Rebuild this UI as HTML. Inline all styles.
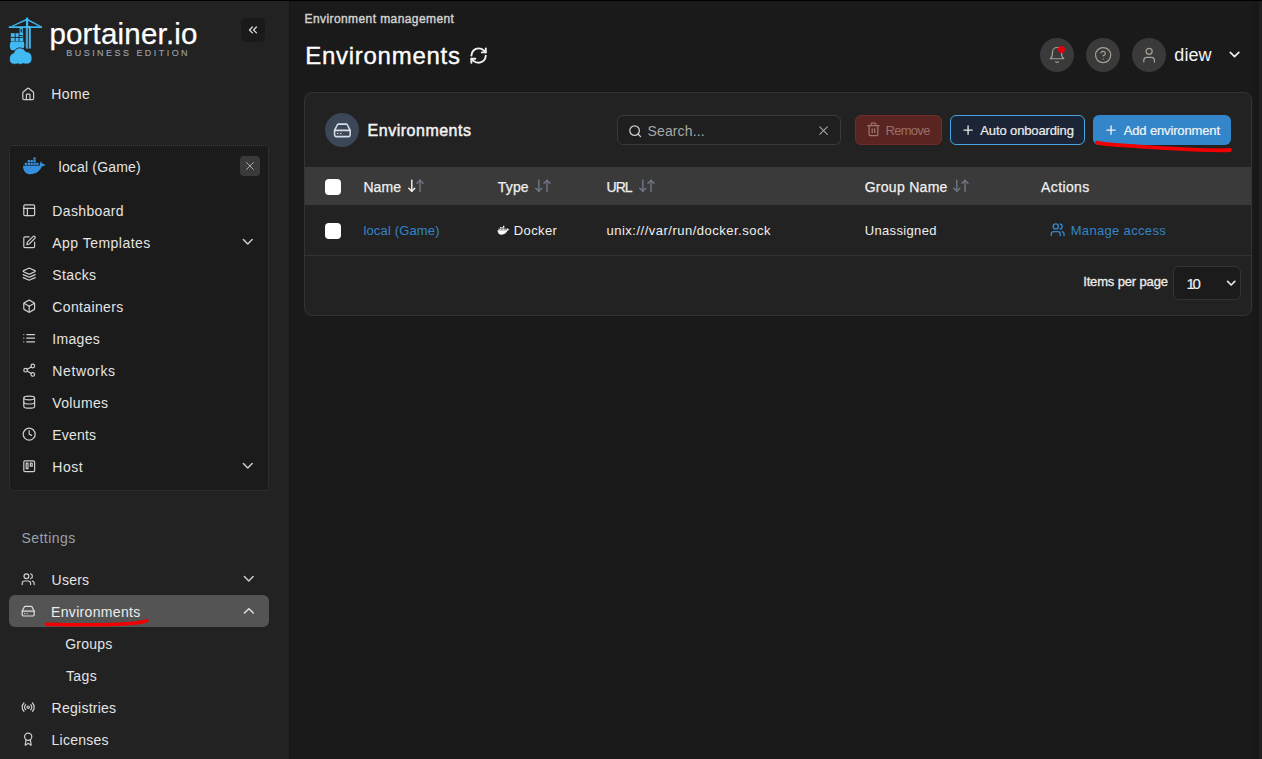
<!DOCTYPE html>
<html><head><meta charset="utf-8">
<style>
*{box-sizing:border-box;margin:0;padding:0}
html,body{width:1262px;height:759px;overflow:hidden;background:#1a1a1a;font-family:"Liberation Sans",sans-serif;color:#e6e6e6;position:relative}
.t{position:absolute;white-space:nowrap}
.b{position:absolute}
svg.i{position:absolute;overflow:visible}
</style></head><body>
<div class="b" style="left:0px;top:0px;width:289px;height:759px;background:#222222"></div>
<div class="b" style="left:289px;top:0px;width:1px;height:759px;background:#171717"></div>
<div class="b" style="left:1253px;top:0px;width:6px;height:759px;background:#181818"></div>
<div class="b" style="left:1259px;top:0px;width:3px;height:759px;background:#202020"></div>
<div class="b" style="left:0px;top:0px;width:1262px;height:1px;background:#000"></div>
<svg class="i" style="left:0;top:0" width="50" height="70" viewBox="0 0 50 70">
<g fill="#41b9f2">
<path d="M8.8 26.2 H42 V28 H8.8z"/>
<path d="M27 18.6 L10.2 26.4 L12.8 26.4 L27 20.2 L39.2 26.4 L41.8 26.4z"/>
<rect x="26" y="17.6" width="2.2" height="9"/>
<rect x="25.8" y="26" width="5" height="22.5"/>
<rect x="19.6" y="28" width="3.2" height="8.8"/>
<rect x="10.8" y="33.2" width="12.4" height="8"/>
<path d="M12.3 41.6 H23.6 C24.6 43 24.6 46.5 23.6 48.2 C22.4 50 20 50.3 17 50.3 H12.6 C10.4 50.3 9.8 48 9.8 45.5 C9.8 43 10.6 41.6 12.3 41.6z"/>
</g>
<g fill="#41b9f2" stroke="#222222" stroke-width="0.9">
<path d="M12.6 64 C10 63.6 9.2 61 9.4 58.2 C9.7 55.2 11.2 53.4 13.6 53 C14.4 50 16.6 48 19.6 47.9 C22.6 47.9 24.8 49.4 25.8 51.6 C29.2 51.6 31.6 53.6 32 57 C32.4 60.4 31.2 63.2 28.6 63.8 C27 64.4 25 64.2 23.4 63.6 C21.6 64.6 19.4 64.6 18 63.8 C16.4 64.4 14 64.4 12.6 64z"/>
</g>
<g fill="#222222">
<rect x="28.2" y="28.2" width="0.8" height="20.5"/>
<rect x="20.6" y="29" width="1.2" height="3.4"/>
<rect x="19.6" y="35" width="3.2" height="0.9"/>
<rect x="10.8" y="36.9" width="12.4" height="0.9"/>
<rect x="14.7" y="33.2" width="0.9" height="8"/>
<rect x="18.6" y="33.2" width="0.9" height="8"/>
</g>
<rect x="26.4" y="28.2" width="1.6" height="20" fill="#4c94bd"/>
</svg>
<div class="t" style="left:49.4px;top:18.799999999999997px;font-size:29.5px;line-height:29.5px;color:#ffffff;letter-spacing:0.198px;-webkit-text-stroke:0.25px #ffffff;">portainer.io</div>
<div class="t" style="left:66.3px;top:49px;font-size:9px;line-height:9px;color:#9ca3af;letter-spacing:2.452px;-webkit-text-stroke:0.12px #9ca3af;">BUSINESS EDITION</div>
<div class="b" style="left:241px;top:18px;width:24px;height:24px;background:#1a1a1a;border-radius:5px"></div>
<svg class="i" style="left:246.1px;top:22.8px;" width="13.92" height="13.92" viewBox="0 0 24 24" fill="none" stroke="#d8d8d8" stroke-width="2.3" stroke-linecap="round" stroke-linejoin="round"><path d="m11 17-5-5 5-5"/><path d="m18 17-5-5 5-5"/></svg>
<svg class="i" style="left:20.8px;top:87.1px;" width="14.4" height="14.4" viewBox="0 0 24 24" fill="none" stroke="#cfcfcf" stroke-width="2" stroke-linecap="round" stroke-linejoin="round"><path d="M15 21v-8a1 1 0 0 0-1-1h-4a1 1 0 0 0-1 1v8"/><path d="M3 10a2 2 0 0 1 .709-1.528l7-5.999a2 2 0 0 1 2.582 0l7 5.999A2 2 0 0 1 21 10v9a2 2 0 0 1-2 2H5a2 2 0 0 1-2-2z"/></svg>
<div class="t" style="left:51.3px;top:87px;font-size:14px;line-height:14px;color:#e4e4e4;letter-spacing:0.365px;">Home</div>
<div class="b" style="left:9px;top:145px;width:260px;height:346px;background:#1b1b1b;border:1px dotted #3d3d3d;border-radius:4px"></div>
<svg class="i" style="left:20px;top:154px" width="30" height="24" viewBox="20 154 30 24">
<g fill="#3490dc">
<rect x="24.8" y="162.8" width="2.3" height="2.4"/><rect x="27.7" y="162.8" width="2.3" height="2.4"/><rect x="30.5" y="162.8" width="2.3" height="2.4"/><rect x="33.4" y="162.8" width="2.3" height="2.4"/><rect x="36.2" y="162.8" width="2.3" height="2.4"/>
<rect x="27.7" y="160" width="2.3" height="2.3"/><rect x="30.5" y="160" width="2.3" height="2.3"/><rect x="33.4" y="160" width="2.3" height="2.3"/>
<rect x="33.4" y="157.4" width="2.3" height="2.3"/>
<path d="M23 165.7 H39.6 C39.9 164 40.3 162.4 40.9 161.6 C41.8 162.3 42.4 163.2 42.6 164 C43.6 163.8 44.8 164 45.6 164.6 C44.8 165.6 43.4 166.4 41.8 166.6 C40.2 171 36 174.3 30.5 174.3 C25.8 174.3 23 170.8 23 165.7z"/>
</g></svg>
<div class="t" style="left:58.6px;top:160px;font-size:14px;line-height:14px;color:#e4e4e4;letter-spacing:0.176px;">local (Game)</div>
<div class="b" style="left:240px;top:156px;width:20px;height:20px;background:#3a3a3a;border-radius:4px"></div>
<svg class="i" style="left:243.1px;top:159.1px;" width="13.92" height="13.92" viewBox="0 0 24 24" fill="none" stroke="#b8bcc6" stroke-width="1.5" stroke-linecap="round" stroke-linejoin="round"><line x1="18" y1="6" x2="6" y2="18"/><line x1="6" y1="6" x2="18" y2="18"/></svg>
<svg class="i" style="left:21.7px;top:202.8px;" width="14.4" height="14.4" viewBox="0 0 24 24" fill="none" stroke="#cfcfcf" stroke-width="2" stroke-linecap="round" stroke-linejoin="round"><rect width="18" height="18" x="3" y="3" rx="2"/><path d="M3 9h18"/><path d="M9 21V9"/></svg>
<div class="t" style="left:52.3px;top:204px;font-size:14px;line-height:14px;color:#e4e4e4;letter-spacing:0.354px;">Dashboard</div>
<svg class="i" style="left:21.7px;top:234.8px;" width="14.4" height="14.4" viewBox="0 0 24 24" fill="none" stroke="#cfcfcf" stroke-width="2" stroke-linecap="round" stroke-linejoin="round"><path d="M12 3H5a2 2 0 0 0-2 2v14a2 2 0 0 0 2 2h14a2 2 0 0 0 2-2v-7"/><path d="M18.375 2.625a2.121 2.121 0 1 1 3 3L12 15l-4 1 1-4Z"/></svg>
<div class="t" style="left:52.3px;top:236px;font-size:14px;line-height:14px;color:#e4e4e4;letter-spacing:0.466px;">App Templates</div>
<svg class="i" style="left:21.7px;top:266.8px;" width="14.4" height="14.4" viewBox="0 0 24 24" fill="none" stroke="#cfcfcf" stroke-width="2" stroke-linecap="round" stroke-linejoin="round"><path d="M12.83 2.18a2 2 0 0 0-1.66 0L2.6 6.08a1 1 0 0 0 0 1.83l8.58 3.91a2 2 0 0 0 1.66 0l8.58-3.9a1 1 0 0 0 0-1.83Z"/><path d="m22 17.65-9.17 4.16a2 2 0 0 1-1.66 0L2 17.65"/><path d="m22 12.65-9.17 4.16a2 2 0 0 1-1.66 0L2 12.65"/></svg>
<div class="t" style="left:52.3px;top:268px;font-size:14px;line-height:14px;color:#e4e4e4;letter-spacing:0.36px;">Stacks</div>
<svg class="i" style="left:21.7px;top:298.8px;" width="14.4" height="14.4" viewBox="0 0 24 24" fill="none" stroke="#cfcfcf" stroke-width="2" stroke-linecap="round" stroke-linejoin="round"><path d="M21 16V8a2 2 0 0 0-1-1.73l-7-4a2 2 0 0 0-2 0l-7 4A2 2 0 0 0 3 8v8a2 2 0 0 0 1 1.73l7 4a2 2 0 0 0 2 0l7-4A2 2 0 0 0 21 16z"/><polyline points="3.27 6.96 12 12.01 20.73 6.96"/><line x1="12" y1="22.08" x2="12" y2="12"/></svg>
<div class="t" style="left:52.3px;top:300px;font-size:14px;line-height:14px;color:#e4e4e4;letter-spacing:0.354px;">Containers</div>
<svg class="i" style="left:21.7px;top:330.8px;" width="14.4" height="14.4" viewBox="0 0 24 24" fill="none" stroke="#cfcfcf" stroke-width="2" stroke-linecap="round" stroke-linejoin="round"><line x1="8" y1="6" x2="21" y2="6"/><line x1="8" y1="12" x2="21" y2="12"/><line x1="8" y1="18" x2="21" y2="18"/><line x1="3" y1="6" x2="3.01" y2="6"/><line x1="3" y1="12" x2="3.01" y2="12"/><line x1="3" y1="18" x2="3.01" y2="18"/></svg>
<div class="t" style="left:52.3px;top:332px;font-size:14px;line-height:14px;color:#e4e4e4;letter-spacing:0.312px;">Images</div>
<svg class="i" style="left:21.7px;top:362.8px;" width="14.4" height="14.4" viewBox="0 0 24 24" fill="none" stroke="#cfcfcf" stroke-width="2" stroke-linecap="round" stroke-linejoin="round"><circle cx="18" cy="5" r="3"/><circle cx="6" cy="12" r="3"/><circle cx="18" cy="19" r="3"/><line x1="8.59" y1="13.51" x2="15.42" y2="17.49"/><line x1="15.41" y1="6.51" x2="8.59" y2="10.49"/></svg>
<div class="t" style="left:52.3px;top:364px;font-size:14px;line-height:14px;color:#e4e4e4;letter-spacing:0.628px;">Networks</div>
<svg class="i" style="left:21.7px;top:394.8px;" width="14.4" height="14.4" viewBox="0 0 24 24" fill="none" stroke="#cfcfcf" stroke-width="2" stroke-linecap="round" stroke-linejoin="round"><ellipse cx="12" cy="5" rx="9" ry="3"/><path d="M21 12c0 1.66-4 3-9 3s-9-1.34-9-3"/><path d="M3 5v14c0 1.66 4 3 9 3s9-1.34 9-3V5"/></svg>
<div class="t" style="left:52.3px;top:396px;font-size:14px;line-height:14px;color:#e4e4e4;letter-spacing:0.351px;">Volumes</div>
<svg class="i" style="left:21.7px;top:426.8px;" width="14.4" height="14.4" viewBox="0 0 24 24" fill="none" stroke="#cfcfcf" stroke-width="2" stroke-linecap="round" stroke-linejoin="round"><circle cx="12" cy="12" r="10"/><polyline points="12 6 12 12 16 14"/></svg>
<div class="t" style="left:52.3px;top:428px;font-size:14px;line-height:14px;color:#e4e4e4;letter-spacing:0.185px;">Events</div>
<svg class="i" style="left:21.7px;top:458.8px;" width="14.4" height="14.4" viewBox="0 0 24 24" fill="none" stroke="#cfcfcf" stroke-width="2" stroke-linecap="round" stroke-linejoin="round"><rect width="18" height="18" x="3" y="3" rx="2" ry="2"/><rect width="3" height="9" x="7" y="7"/><rect width="3" height="5" x="14" y="7"/></svg>
<div class="t" style="left:52.3px;top:460px;font-size:14px;line-height:14px;color:#e4e4e4;letter-spacing:0.508px;">Host</div>
<svg class="i" style="left:239.25px;top:232.9px;" width="17.52" height="17.52" viewBox="0 0 24 24" fill="none" stroke="#cfcfcf" stroke-width="2" stroke-linecap="round" stroke-linejoin="round"><polyline points="6 9 12 15 18 9"/></svg>
<svg class="i" style="left:239.25px;top:456.9px;" width="17.52" height="17.52" viewBox="0 0 24 24" fill="none" stroke="#cfcfcf" stroke-width="2" stroke-linecap="round" stroke-linejoin="round"><polyline points="6 9 12 15 18 9"/></svg>
<div class="t" style="left:21.4px;top:531px;font-size:14px;line-height:14px;color:#9aa1ab;letter-spacing:0.467px;">Settings</div>
<svg class="i" style="left:20.5px;top:572.1px;" width="14.4" height="14.4" viewBox="0 0 24 24" fill="none" stroke="#cfcfcf" stroke-width="2" stroke-linecap="round" stroke-linejoin="round"><path d="M16 21v-2a4 4 0 0 0-4-4H6a4 4 0 0 0-4 4v2"/><circle cx="9" cy="7" r="4"/><path d="M22 21v-2a4 4 0 0 0-3-3.87"/><path d="M16 3.13a4 4 0 0 1 0 7.75"/></svg>
<div class="t" style="left:51.6px;top:573px;font-size:14px;line-height:14px;color:#e4e4e4;letter-spacing:0.217px;">Users</div>
<svg class="i" style="left:240.25px;top:570.06px;" width="17.52" height="17.52" viewBox="0 0 24 24" fill="none" stroke="#cfcfcf" stroke-width="2" stroke-linecap="round" stroke-linejoin="round"><polyline points="6 9 12 15 18 9"/></svg>
<div class="b" style="left:9px;top:595px;width:260px;height:32px;background:#545454;border-radius:6px"></div>
<svg class="i" style="left:20.5px;top:604.2px;" width="14.4" height="14.4" viewBox="0 0 24 24" fill="none" stroke="#e0e0e0" stroke-width="2" stroke-linecap="round" stroke-linejoin="round"><line x1="22" y1="12" x2="2" y2="12"/><path d="M5.45 5.11L2 12v6a2 2 0 0 0 2 2h16a2 2 0 0 0 2-2v-6l-3.45-6.89A2 2 0 0 0 16.76 4H7.24a2 2 0 0 0-1.79 1.11z"/><line x1="6" y1="16" x2="6.01" y2="16"/><line x1="10" y1="16" x2="10.01" y2="16"/></svg>
<div class="t" style="left:51.0px;top:605px;font-size:14px;line-height:14px;color:#ececec;letter-spacing:0.334px;">Environments</div>
<svg class="i" style="left:239.9px;top:602px;" width="17.76" height="17.76" viewBox="0 0 24 24" fill="none" stroke="#e0e0e0" stroke-width="2" stroke-linecap="round" stroke-linejoin="round"><polyline points="18 15 12 9 6 15"/></svg>
<div class="t" style="left:65.2px;top:637px;font-size:14px;line-height:14px;color:#e4e4e4;letter-spacing:0.253px;">Groups</div>
<div class="t" style="left:66.0px;top:669px;font-size:14px;line-height:14px;color:#e4e4e4;letter-spacing:0.356px;">Tags</div>
<svg class="i" style="left:20.94px;top:699.64px;" width="14.4" height="14.4" viewBox="0 0 24 24" fill="none" stroke="#cfcfcf" stroke-width="2" stroke-linecap="round" stroke-linejoin="round"><circle cx="12" cy="12" r="2"/><path d="M16.24 7.76a6 6 0 0 1 0 8.49m-8.48-.01a6 6 0 0 1 0-8.49m11.31-2.82a10 10 0 0 1 0 14.14m-14.14 0a10 10 0 0 1 0-14.14"/></svg>
<div class="t" style="left:51.6px;top:701px;font-size:14px;line-height:14px;color:#e4e4e4;letter-spacing:0.251px;">Registries</div>
<svg class="i" style="left:21px;top:732.2px;" width="14.4" height="14.4" viewBox="0 0 24 24" fill="none" stroke="#cfcfcf" stroke-width="2" stroke-linecap="round" stroke-linejoin="round"><path d="m15.477 12.89 1.515 8.526a.5.5 0 0 1-.81.47l-3.58-2.687a1 1 0 0 0-1.197 0l-3.586 2.686a.5.5 0 0 1-.81-.469l1.514-8.526"/><circle cx="12" cy="8" r="6"/></svg>
<div class="t" style="left:51.6px;top:733px;font-size:14px;line-height:14px;color:#e4e4e4;letter-spacing:0.222px;">Licenses</div>
<svg class="i" style="left:0;top:0" width="300" height="700"><path d="M46.5 624.2 C80 625.2 115 624.6 133 623.3 C141 622.6 145 621.8 146.8 620.6" fill="none" stroke="#f00000" stroke-width="3.6" stroke-linecap="round"/></svg>
<div class="t" style="left:304.5px;top:13px;font-size:12px;line-height:12px;color:#d2d2d2;letter-spacing:0.414px;-webkit-text-stroke:0.4px #d2d2d2;">Environment management</div>
<div class="t" style="left:305.3px;top:44px;font-size:24px;line-height:24px;color:#ffffff;letter-spacing:0.716px;-webkit-text-stroke:0.35px #ffffff;">Environments</div>
<svg class="i" style="left:468.6px;top:45.5px;" width="19.2" height="19.2" viewBox="0 0 24 24" fill="none" stroke="#f0f0f0" stroke-width="2.4" stroke-linecap="round" stroke-linejoin="round"><path d="M3 12a9 9 0 0 1 9-9 9.75 9.75 0 0 1 6.74 2.74L21 8"/><path d="M21 3v5h-5"/><path d="M21 12a9 9 0 0 1-9 9 9.75 9.75 0 0 1-6.74-2.74L3 16"/><path d="M8 16H3v5"/></svg>
<div class="b" style="left:1040px;top:38px;width:34px;height:34px;background:#3a3a3a;border-radius:50%"></div>
<div class="b" style="left:1086px;top:38px;width:34px;height:34px;background:#3a3a3a;border-radius:50%"></div>
<div class="b" style="left:1132px;top:38px;width:34px;height:34px;background:#3a3a3a;border-radius:50%"></div>
<svg class="i" style="left:1048px;top:45.75px;" width="18.0" height="18.0" viewBox="0 0 24 24" fill="none" stroke="#a8a197" stroke-width="1.6" stroke-linecap="round" stroke-linejoin="round"><path d="M6 8a6 6 0 0 1 12 0c0 7 3 9 3 9H3s3-2 3-9"/><path d="M10.3 21a1.94 1.94 0 0 0 3.4 0"/></svg>
<div class="b" style="left:1058px;top:46px;width:7px;height:7px;background:#e5000a;border-radius:50%"></div>
<svg class="i" style="left:1093.9px;top:46.04px;" width="18.24" height="18.24" viewBox="0 0 24 24" fill="none" stroke="#a8a197" stroke-width="1.6" stroke-linecap="round" stroke-linejoin="round"><circle cx="12" cy="12" r="10"/><path d="M9.09 9a3 3 0 0 1 5.83 1c0 2-3 3-3 3"/><line x1="12" y1="17" x2="12.01" y2="17"/></svg>
<svg class="i" style="left:1139.76px;top:45.98px;" width="18.24" height="18.24" viewBox="0 0 24 24" fill="none" stroke="#a8a197" stroke-width="1.6" stroke-linecap="round" stroke-linejoin="round"><path d="M19 21v-2a4 4 0 0 0-4-4H9a4 4 0 0 0-4 4v2"/><circle cx="12" cy="7" r="4"/></svg>
<div class="t" style="left:1174.3px;top:46px;font-size:18px;line-height:18px;color:#f2f2f2;letter-spacing:0.092px;">diew</div>
<svg class="i" style="left:1226.4px;top:46.2px;" width="17.136" height="17.136" viewBox="0 0 24 24" fill="none" stroke="#ececec" stroke-width="2.4" stroke-linecap="round" stroke-linejoin="round"><polyline points="6 9 12 15 18 9"/></svg>
<div class="b" style="left:304px;top:92px;width:948px;height:224px;background:#222222;border:1px solid #333333;border-radius:8px"></div>
<div class="b" style="left:325px;top:113px;width:34px;height:34px;background:#3b4657;border-radius:50%"></div>
<svg class="i" style="left:332.9px;top:120.6px;" width="18.72" height="18.72" viewBox="0 0 24 24" fill="none" stroke="#d5dde8" stroke-width="2" stroke-linecap="round" stroke-linejoin="round"><line x1="22" y1="12" x2="2" y2="12"/><path d="M5.45 5.11L2 12v6a2 2 0 0 0 2 2h16a2 2 0 0 0 2-2v-6l-3.45-6.89A2 2 0 0 0 16.76 4H7.24a2 2 0 0 0-1.79 1.11z"/><line x1="6" y1="16" x2="6.01" y2="16"/><line x1="10" y1="16" x2="10.01" y2="16"/></svg>
<div class="t" style="left:367.6px;top:123px;font-size:16px;line-height:16px;color:#f2f2f2;letter-spacing:0.505px;-webkit-text-stroke:0.5px #f2f2f2;">Environments</div>
<div class="b" style="left:617px;top:115px;width:224px;height:30px;background:#1f1f1f;border:1px solid #3a3a3a;border-radius:6px"></div>
<svg class="i" style="left:627.5px;top:123.5px;" width="14.4" height="14.4" viewBox="0 0 24 24" fill="none" stroke="#cccccc" stroke-width="2.1" stroke-linecap="round" stroke-linejoin="round"><circle cx="11" cy="11" r="8"/><path d="m21 21-4.3-4.3"/></svg>
<div class="t" style="left:647.5px;top:124px;font-size:14px;line-height:14px;color:#a7a7a7;letter-spacing:0.138px;">Search...</div>
<svg class="i" style="left:815.55px;top:122.55px;" width="15.12" height="15.12" viewBox="0 0 24 24" fill="none" stroke="#a8a8a8" stroke-width="1.7" stroke-linecap="round" stroke-linejoin="round"><line x1="18" y1="6" x2="6" y2="18"/><line x1="6" y1="6" x2="18" y2="18"/></svg>
<div class="b" style="left:855px;top:115px;width:87px;height:30px;background:#5a2521;border:1px solid #6e2d28;border-radius:6px"></div>
<svg class="i" style="left:865.76px;top:122.28px;" width="14.88" height="14.88" viewBox="0 0 24 24" fill="none" stroke="#9c7470" stroke-width="2" stroke-linecap="round" stroke-linejoin="round"><path d="M3 6h18"/><path d="M19 6v14c0 1-1 2-2 2H7c-1 0-2-1-2-2V6"/><path d="M8 6V4c0-1 1-2 2-2h4c1 0 2 1 2 2v2"/><line x1="10" x2="10" y1="11" y2="17"/><line x1="14" x2="14" y1="11" y2="17"/></svg>
<div class="t" style="left:885.6px;top:124px;font-size:13px;line-height:13px;color:#9c6f69;letter-spacing:-0.729px;">Remove</div>
<div class="b" style="left:950px;top:115px;width:135px;height:30px;background:#1c2536;border:1px solid #4ba3e0;border-radius:6px"></div>
<svg class="i" style="left:960.64px;top:123.04px;" width="14.16" height="14.16" viewBox="0 0 24 24" fill="none" stroke="#e6e6e6" stroke-width="2.3" stroke-linecap="round" stroke-linejoin="round"><line x1="12" y1="5" x2="12" y2="19"/><line x1="5" y1="12" x2="19" y2="12"/></svg>
<div class="t" style="left:980.3px;top:124px;font-size:13px;line-height:13px;color:#ededed;letter-spacing:-0.126px;-webkit-text-stroke:0.2px #ededed;">Auto onboarding</div>
<div class="b" style="left:1093px;top:115px;width:138px;height:30px;background:#3286c9;border-radius:6px"></div>
<svg class="i" style="left:1104.14px;top:123.04px;" width="14.16" height="14.16" viewBox="0 0 24 24" fill="none" stroke="#f0f0f0" stroke-width="2.3" stroke-linecap="round" stroke-linejoin="round"><line x1="12" y1="5" x2="12" y2="19"/><line x1="5" y1="12" x2="19" y2="12"/></svg>
<div class="t" style="left:1123.7px;top:124px;font-size:13px;line-height:13px;color:#f4f4f4;letter-spacing:-0.137px;-webkit-text-stroke:0.2px #f4f4f4;">Add environment</div>
<svg class="i" style="left:0;top:0" width="1262" height="200"><path d="M1097 142.6 C1102 144.6 1120 145.2 1135 146.2 C1160 147.8 1190 149.8 1212 150.2 C1222 150.3 1227 150.2 1230 150" fill="none" stroke="#f00000" stroke-width="3.8" stroke-linecap="round"/></svg>
<div class="b" style="left:305px;top:167px;width:946px;height:38px;background:#3a3a3a"></div>
<div class="b" style="left:325px;top:179px;width:16px;height:16px;background:#ffffff;border-radius:4px"></div>
<div class="t" style="left:363.4px;top:180px;font-size:14px;line-height:14px;color:#f0f0f0;letter-spacing:0.098px;-webkit-text-stroke:0.25px #f0f0f0;">Name</div>
<div class="t" style="left:497.8px;top:180px;font-size:14px;line-height:14px;color:#f0f0f0;letter-spacing:0.165px;-webkit-text-stroke:0.25px #f0f0f0;">Type</div>
<div class="t" style="left:606.5px;top:180px;font-size:14px;line-height:14px;color:#f0f0f0;letter-spacing:-0.95px;-webkit-text-stroke:0.25px #f0f0f0;">URL</div>
<div class="t" style="left:864.7px;top:180px;font-size:14px;line-height:14px;color:#f0f0f0;letter-spacing:0.282px;-webkit-text-stroke:0.25px #f0f0f0;">Group Name</div>
<div class="t" style="left:1041.0px;top:180px;font-size:14px;line-height:14px;color:#f0f0f0;letter-spacing:0.394px;-webkit-text-stroke:0.25px #f0f0f0;">Actions</div>
<svg class="i" style="left:408px;top:179px" width="17" height="14" viewBox="0 0 17 14" fill="none" stroke-width="1.5" stroke-linecap="round" stroke-linejoin="round"><g stroke="#f0f0f0"><line x1="3.8" y1="1.2" x2="3.8" y2="12.2"/><polyline points="0.8 9.2 3.8 12.2 6.8 9.2"/></g><g stroke="#6e7481"><line x1="12" y1="12.2" x2="12" y2="1.2"/><polyline points="9 4.2 12 1.2 15 4.2"/></g></svg>
<svg class="i" style="left:535px;top:179px" width="17" height="14" viewBox="0 0 17 14" fill="none" stroke-width="1.5" stroke-linecap="round" stroke-linejoin="round"><g stroke="#6e7481"><line x1="3.8" y1="1.2" x2="3.8" y2="12.2"/><polyline points="0.8 9.2 3.8 12.2 6.8 9.2"/></g><g stroke="#6e7481"><line x1="12" y1="12.2" x2="12" y2="1.2"/><polyline points="9 4.2 12 1.2 15 4.2"/></g></svg>
<svg class="i" style="left:639px;top:179px" width="17" height="14" viewBox="0 0 17 14" fill="none" stroke-width="1.5" stroke-linecap="round" stroke-linejoin="round"><g stroke="#6e7481"><line x1="3.8" y1="1.2" x2="3.8" y2="12.2"/><polyline points="0.8 9.2 3.8 12.2 6.8 9.2"/></g><g stroke="#6e7481"><line x1="12" y1="12.2" x2="12" y2="1.2"/><polyline points="9 4.2 12 1.2 15 4.2"/></g></svg>
<svg class="i" style="left:953px;top:179px" width="17" height="14" viewBox="0 0 17 14" fill="none" stroke-width="1.5" stroke-linecap="round" stroke-linejoin="round"><g stroke="#6e7481"><line x1="3.8" y1="1.2" x2="3.8" y2="12.2"/><polyline points="0.8 9.2 3.8 12.2 6.8 9.2"/></g><g stroke="#6e7481"><line x1="12" y1="12.2" x2="12" y2="1.2"/><polyline points="9 4.2 12 1.2 15 4.2"/></g></svg>
<div class="b" style="left:325px;top:223px;width:16px;height:16px;background:#ffffff;border-radius:4px"></div>
<div class="t" style="left:363.4px;top:224px;font-size:13px;line-height:13px;color:#3484c8;letter-spacing:0.16px;">local (Game)</div>
<svg class="i" style="left:496.8px;top:225px" width="13.3" height="10.6" viewBox="22 156 25 20">
<g fill="#ffffff">
<rect x="24.8" y="162.8" width="2.3" height="2.4"/><rect x="27.7" y="162.8" width="2.3" height="2.4"/><rect x="30.5" y="162.8" width="2.3" height="2.4"/><rect x="33.4" y="162.8" width="2.3" height="2.4"/><rect x="36.2" y="162.8" width="2.3" height="2.4"/>
<rect x="27.7" y="160" width="2.3" height="2.3"/><rect x="30.5" y="160" width="2.3" height="2.3"/><rect x="33.4" y="160" width="2.3" height="2.3"/>
<rect x="33.4" y="157.4" width="2.3" height="2.3"/>
<path d="M23 165.7 H39.6 C39.9 164 40.3 162.4 40.9 161.6 C41.8 162.3 42.4 163.2 42.6 164 C43.6 163.8 44.8 164 45.6 164.6 C44.8 165.6 43.4 166.4 41.8 166.6 C40.2 171 36 174.3 30.5 174.3 C25.8 174.3 23 170.8 23 165.7z"/>
</g></svg>
<div class="t" style="left:513.8px;top:224px;font-size:13px;line-height:13px;color:#f0f0f0;letter-spacing:0.393px;">Docker</div>
<div class="t" style="left:606.5px;top:224px;font-size:13px;line-height:13px;color:#f0f0f0;letter-spacing:0.495px;">unix:///var/run/docker.sock</div>
<div class="t" style="left:864.7px;top:224px;font-size:13px;line-height:13px;color:#f0f0f0;letter-spacing:0.349px;">Unassigned</div>
<svg class="i" style="left:1050.06px;top:222.4px;" width="15.36" height="15.36" viewBox="0 0 24 24" fill="none" stroke="#3484c8" stroke-width="2.2" stroke-linecap="round" stroke-linejoin="round"><path d="M16 21v-2a4 4 0 0 0-4-4H6a4 4 0 0 0-4 4v2"/><circle cx="9" cy="7" r="4"/><path d="M22 21v-2a4 4 0 0 0-3-3.87"/><path d="M16 3.13a4 4 0 0 1 0 7.75"/></svg>
<div class="t" style="left:1070.7px;top:224px;font-size:13px;line-height:13px;color:#3484c8;letter-spacing:0.333px;">Manage access</div>
<div class="b" style="left:305px;top:255px;width:946px;height:1px;background:#333333"></div>
<div class="t" style="left:1083.2px;top:275px;font-size:13px;line-height:13px;color:#ececec;letter-spacing:-0.149px;-webkit-text-stroke:0.3px #ececec;">Items per page</div>
<div class="b" style="left:1173px;top:266px;width:68px;height:34px;background:#1b1b1b;border:1px solid #343434;border-radius:6px"></div>
<div class="t" style="left:1186.4px;top:276.2px;font-size:15px;line-height:15px;color:#f0f0f0;letter-spacing:-2.241px;-webkit-text-stroke:0.15px #f0f0f0;">10</div>
<svg class="i" style="left:1223.7px;top:275.9px;" width="14.4" height="14.4" viewBox="0 0 24 24" fill="none" stroke="#e6e6e6" stroke-width="2.8" stroke-linecap="round" stroke-linejoin="round"><polyline points="6 9 12 15 18 9"/></svg>
</body></html>
